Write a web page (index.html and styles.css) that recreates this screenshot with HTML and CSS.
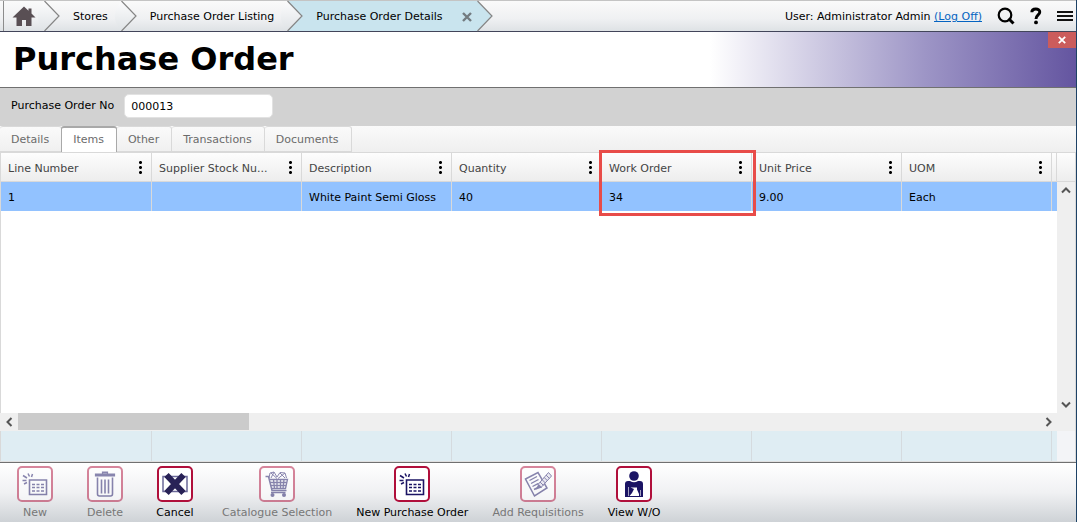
FILE: index.html
```html
<!DOCTYPE html>
<html lang="en">
<head>
<meta charset="utf-8">
<title>Purchase Order Details</title>
<link rel="stylesheet" href="styles.css">
</head>
<body>
<svg class="defs" aria-hidden="true">
  <defs>
    <linearGradient id="puff" x1="0" y1="0" x2="0" y2="1">
      <stop offset="0" stop-color="#fcfcfd"/>
      <stop offset="1" stop-color="#dfe3e6"/>
    </linearGradient>
    <symbol id="sep" viewBox="-7 0 23 30">
      <path d="M0.500 0Q-13 15 0.500 30L15 15z" fill="url(#puff)"/>
      <path class="chevron" d="M0.500 0L15 15L0.500 30"/>
    </symbol>
    <symbol id="table-new" viewBox="0 0 36 36">
      <path d="M12.500 14h17v14.500h-17z" fill="#fff" stroke="#1b1464" stroke-width="1.600"/>
      <path d="M15 18.500h3m1.500 0h3m1.500 0h3M15 21.500h3m1.500 0h3m1.500 0h3M15 25h3m1.500 0h3m1.500 0h3" stroke="#1b1464" stroke-width="1.500"/>
      <path d="M6 9.500l4 2.500M5.500 14.500h4M7 18l3-1.500M11 7.500l1.500 3M15.500 8l-1 3" stroke="#1b1464" stroke-width="1.500" fill="none"/>
    </symbol>
  </defs>
</svg>
<div class="app">
  <header class="topbar">
    <nav class="crumbs" aria-label="Breadcrumb">
      <a class="crumb home" href="#" aria-label="Home">
        <svg width="24" height="21" viewBox="0 0 24 21"><path d="M12 0.500L0.500 11.500h4V20h5.500v-6h4v6H19.500v-8.500h4L19.500 7.600V2.500h-3v2.300z" fill="#594f54"/></svg>
      </a>
      <svg class="sep"><use href="#sep" x="-7" width="23" height="30"/></svg>
      <a class="crumb" href="#">Stores</a>
      <svg class="sep"><use href="#sep" x="-7" width="23" height="30"/></svg>
      <a class="crumb" href="#">Purchase Order Listing</a>
      <svg class="sep" viewBox="0 0 16 30"><path class="blue" d="M0.500 0H16V30H0.500L15 15z"/><path d="M0.500 0Q-13 15 0.500 30L15 15z" fill="url(#puff)"/><path class="chevron" d="M0.500 0L15 15L0.500 30"/></svg>
      <span class="crumb current">Purchase Order Details
        <button class="crumb-close" type="button" aria-label="Close tab"><svg width="10" height="10" viewBox="0 0 10 10"><path d="M1 1L9 9M9 1L1 9" stroke="#737b80" stroke-width="2.400"/></svg></button>
      </span>
      <svg class="sep" viewBox="0 0 16 30"><path class="blue" d="M0 0L15 15L0 30z"/><path class="chevron" d="M0.500 0L15 15L0.500 30"/></svg>
    </nav>
    <div class="tools">
      <span>User: Administrator Admin <a class="logoff" href="#">(Log Off)</a></span>
      <button type="button" aria-label="Search"><svg width="18" height="18" viewBox="0 0 18 18"><circle cx="8" cy="8" r="6.300" fill="none" stroke="#000" stroke-width="2.200"/><path d="M11.500 11.500L16.500 16.500" stroke="#000" stroke-width="3"/></svg></button>
      <button type="button" aria-label="Help"><svg width="12" height="18" viewBox="0 0 12 18"><path d="M1.800 5.300C1.800 1 9.800 1 9.800 5C9.800 8 6 8 6 12" fill="none" stroke="#000" stroke-width="2.900"/><circle cx="6" cy="15.400" r="1.900"/></svg></button>
      <button type="button" aria-label="Menu"><svg width="16" height="10" viewBox="0 0 16 10"><path d="M0 1h16M0 5h16M0 9h16" stroke="#111" stroke-width="2"/></svg></button>
    </div>
  </header>

  <section class="banner">
    <h1>Purchase Order</h1>
    <button class="close" type="button" aria-label="Close"><svg width="8" height="8" viewBox="0 0 8 8"><path d="M0.800 0.800L7.200 7.200M7.200 0.800L0.800 7.200" stroke="#fff" stroke-width="1.800"/></svg></button>
  </section>

  <form class="order">
    <label for="po">Purchase Order No</label>
    <input id="po" type="text" value="000013">
  </form>

  <div class="tabs" role="tablist">
    <button type="button" role="tab">Details</button>
    <button type="button" role="tab" class="active" aria-selected="true">Items</button>
    <button type="button" role="tab">Other</button>
    <button type="button" role="tab">Transactions</button>
    <button type="button" role="tab">Documents</button>
  </div>

  <main class="grid">
    <div class="rows">
      <table class="items">
        <colgroup><col class="first"><col class="std"><col class="std"><col class="std"><col class="std"><col class="std"><col class="std"><col></colgroup>
        <thead>
          <tr>
            <th><div class="head"><span>Line Number</span><button type="button" class="dots" aria-label="Column menu"></button></div></th>
            <th><div class="head"><span>Supplier Stock Nu...</span><button type="button" class="dots" aria-label="Column menu"></button></div></th>
            <th><div class="head"><span>Description</span><button type="button" class="dots" aria-label="Column menu"></button></div></th>
            <th><div class="head"><span>Quantity</span><button type="button" class="dots" aria-label="Column menu"></button></div></th>
            <th class="marked"><div class="head"><span>Work Order</span><button type="button" class="dots" aria-label="Column menu"></button></div></th>
            <th><div class="head"><span>Unit Price</span><button type="button" class="dots" aria-label="Column menu"></button></div></th>
            <th><div class="head"><span>UOM</span><button type="button" class="dots" aria-label="Column menu"></button></div></th>
            <th></th>
          </tr>
        </thead>
        <tbody>
          <tr><td>1</td><td></td><td>White Paint Semi Gloss</td><td>40</td><td>34</td><td>9.00</td><td>Each</td><td></td></tr>
        </tbody>
      </table>
    </div>
    <div class="side">
      <div class="cap"></div>
      <div class="vscroll">
        <svg width="10" height="8" viewBox="0 0 10 8"><path d="M1 6.500L5 2.500L9 6.500"/></svg>
        <svg width="10" height="8" viewBox="0 0 10 8"><path d="M1 1.500L5 5.500L9 1.500"/></svg>
      </div>
    </div>
    <div class="hscroll">
      <svg width="8" height="10" viewBox="0 0 8 10"><path d="M6.500 1L2.500 5L6.500 9"/></svg>
      <div class="track"><div class="thumb"></div></div>
      <svg width="8" height="10" viewBox="0 0 8 10"><path d="M1.500 1L5.500 5L1.500 9"/></svg>
    </div>
    <div class="totals"><span class="first"></span><span></span><span></span><span></span><span></span><span></span><span></span></div>
    <div class="totals-cap"></div>
  </main>

  <footer class="actions">
    <button type="button" disabled>
      <svg class="icon" viewBox="2 2 32 32"><use href="#table-new" width="36" height="36"/></svg>New</button>
    <button type="button" disabled>
      <svg class="icon" viewBox="2 2 32 32"><path d="M15.500 7.500V6h5v1.500M8.500 8h19v2h-19z" fill="#1b1464" stroke="#1b1464" stroke-width="1.200"/><path d="M10.500 11.500V28q0 2 2 2h11q2 0 2-2V11.500" fill="none" stroke="#1b1464" stroke-width="1.600"/><path d="M14.500 13.500v14M18 13.500v14M21.500 13.500v14" stroke="#1b1464" stroke-width="1.600"/></svg>Delete</button>
    <button type="button">
      <svg class="icon" viewBox="2 2 32 32"><path d="M6 10.500h24v15H6z" fill="#fff" stroke="#6a6899" stroke-width="1.500"/><path d="M9.500 9L26.500 27M26.500 9L9.500 27" stroke="#282256" stroke-width="6"/></svg>Cancel</button>
    <button type="button" disabled>
      <svg class="icon" viewBox="2 2 32 32"><g fill="none" stroke="#1b1464"><path d="M6.500 10.500h3l3.500 14h14.500" stroke-width="1.500"/><path d="M10 13.500h18.500l-2 9H12M11 16.500h17M11.500 19.500h15.500M14.500 13.500l1 9M18 13.500v9M21.500 13.500v9M25 13.500l-1 9" stroke-width="1.300"/><path d="M10 12L11 7l4-1 3 5 3-4.500 5 .5 1.500 5M12 7l6 5.500M15 6l-3 6M21 7l5 5M26 7l-7 5.500" stroke-width="1"/><path d="M12 26.500h14.500" stroke-width="1.300"/></g><circle cx="13.500" cy="29" r="2" fill="#1b1464"/><circle cx="25" cy="29" r="2" fill="#1b1464"/></svg>Catalogue Selection</button>
    <button type="button">
      <svg class="icon" viewBox="2 2 32 32"><use href="#table-new" width="36" height="36"/></svg>New Purchase Order</button>
    <button type="button" disabled>
      <svg class="icon" viewBox="2 2 32 32"><path d="M5.500 13L18 6.500L27 22L14.500 30z" fill="#fff" stroke="#1b1464" stroke-width="1.500"/><path d="M9.500 14.500l7.500-4M11 17.500l7.500-4M12.500 20.500l6-3.200M14 23.500l4-2" stroke="#1b1464" stroke-width="1.400"/><path d="M28.500 6.500l3 3.500L21 21.500l-3-3z" fill="#dcdaea" stroke="#1b1464" stroke-width="1"/><path d="M26 9l3.500 3.500M24 11.300l3.500 3.500M22 13.600l3.500 3.500M20 16l3.500 3.500" stroke="#1b1464" stroke-width="1"/><path d="M18.500 18l3.500 3.500-6.500 2.200z" fill="#1b1464"/></svg>Add Requisitions</button>
    <button type="button">
      <svg class="icon" viewBox="2 2 32 32"><circle cx="18" cy="10" r="4.800" fill="#1b1464"/><path d="M9 18q0-3 3-3h2q4 2.500 8 0h2q3 0 3 3v13H9z" fill="#1b1464"/><path d="M14.500 21.500h6.500v2l2 4.500v2h-9.500l2.500-3 2-4z" fill="#fff"/><path d="M12.500 21v9M24.500 24v6" stroke="#fff" stroke-width="0.600"/></svg>View W/O</button>
  </footer>
</div>
</body>
</html>
```
FILE: styles.css
```css
* { box-sizing: border-box; }

body {
  margin: 0;
  font: 11px/14px Verdana, "DejaVu Sans", sans-serif;
  color: #000;
}

button {
  font: inherit;
  border: 0;
  padding: 0;
  background: none;
}

.defs { position: absolute; width: 0; height: 0; }

.app {
  display: flex;
  flex-direction: column;
  min-height: 100vh;
  border-right: 1px solid #1d4266;
}

/* Breadcrumb bar */
.topbar {
  display: flex;
  justify-content: space-between;
  height: 32px;
  border-top: 1px solid #c4c4c4;
  border-bottom: 1px solid #42455a;
  background: linear-gradient(#fafafa, #eff0f2 60%, #dee2e5);
}
.crumbs {
  display: flex;
  margin-left: 3px;
  border-left: 1px solid #8c8c8c;
}
.crumb {
  display: flex;
  align-items: center;
  padding: 2px 13px 0;
  color: #000;
  text-decoration: none;
  white-space: nowrap;
}
.home { width: 40px; padding: 0 7px 0 8px; }
.current { gap: 19px; padding-right: 5px; background: #c9e4ee; }
.crumb-close { display: flex; }
.sep { width: 16px; height: 30px; flex: none; overflow: visible; }
.chevron { fill: none; stroke: #858585; stroke-width: 1.2; }
.blue { fill: #c9e4ee; }

.tools {
  display: flex;
  align-items: center;
  gap: 15px;
  padding-right: 3px;
  white-space: nowrap;
}
.tools span { padding-top: 2px; }
.tools button { display: flex; }
.logoff { color: #0563c1; }

/* Title banner */
.banner {
  display: flex;
  justify-content: space-between;
  align-items: flex-start;
  border-bottom: 1px solid #707070;
  background: linear-gradient(90deg, #fff 66%, #9d95c6 86%, #6455a0);
}
h1 {
  margin: 0;
  padding: 7px 13px 8px;
  font-size: 32px;
  line-height: 40px;
}
.close {
  display: flex;
  align-items: center;
  justify-content: center;
  width: 28px;
  height: 16px;
  background: #cb5c5c;
}

.order {
  display: flex;
  align-items: center;
  gap: 10px;
  padding: 6px 11px 8px;
  background: #d2d2d2;
}
.order input {
  width: 149px;
  height: 24px;
  padding: 0 6px;
  border: 1px solid #e2e2e2;
  border-radius: 5px;
  background: #fff;
  font: inherit;
}

/* Tabs */
.tabs {
  display: flex;
  height: 26px;
  background: linear-gradient(#fafafa, #efefef);
}
.tabs button {
  padding: 2px 12px 0 11px;
  border: solid #d9d9d9;
  border-width: 1px 1px 1px 0;
  border-radius: 3px 3px 0 0;
  background: linear-gradient(#fafafa, #f0f0f0);
  color: #6b6b6b;
}
.tabs .active {
  padding-top: 0;
  border: 1px solid #a9a9a9;
  border-top-width: 2px;
  border-bottom: 0;
  background: #fff;
  margin-left: -1px;
}

/* Data grid */
.grid {
  flex: 1;
  display: grid;
  grid-template-columns: 1fr 18px;
  grid-template-rows: 1fr 18px 30px;
  border-right: 1px solid #d9d9d9;
  border-bottom: 1px solid #e0e0e0;
}
.rows { border-left: 1px solid #d9d9d9; }
.items {
  width: 100%;
  table-layout: fixed;
  border-collapse: separate;
  border-spacing: 0;
}
.items .first { width: 151px; }
.items .std { width: 150px; }
.items th, .items td {
  height: 30px;
  padding: 0 7px;
  border-right: 1px solid #d9d9d9;
  text-align: left;
  font-weight: normal;
  white-space: nowrap;
}
.items th {
  border-top: 1px solid #d9d9d9;
  border-bottom: 1px solid #d9d9d9;
  background: linear-gradient(#fdfdfd, #ededed);
  color: #444;
}
.items td { height: 29px; padding-top: 2px; background: #92c2ff; }
.items td:last-child { border-right: 0; }
.items th:last-child, .items td:last-child { padding: 0; }
.head {
  display: flex;
  align-items: center;
  justify-content: space-between;
}
.head span { padding-top: 3px; }
.dots {
  flex: none;
  width: 7px;
  height: 15px;
  background: radial-gradient(circle, #000 1px, transparent 2px) center / 7px 5px;
}
.marked { position: relative; }
.marked::after {
  content: "";
  position: absolute;
  inset: -3px -5px -35px -3px;
  border: 3px solid #e84c49;
  pointer-events: none;
}

.side { display: flex; flex-direction: column; }
.cap {
  height: 30px;
  border-top: 1px solid #d9d9d9;
  border-bottom: 1px solid #d9d9d9;
  background: linear-gradient(#fdfdfd, #ededed);
}
.vscroll {
  flex: 1;
  display: flex;
  flex-direction: column;
  justify-content: space-between;
  align-items: center;
  padding: 4px 0;
  background: #efefef;
}
.vscroll path, .hscroll path { fill: none; stroke: #555; stroke-width: 2; }
.hscroll {
  grid-column: 1 / -1;
  display: flex;
  align-items: center;
  gap: 5px;
  padding: 0 22px 0 5px;
  background: #efefef;
}
.track { flex: 1; align-self: stretch; }
.thumb { width: 22.6%; height: 17px; background: #cbcbcb; }
.totals {
  display: flex;
  border-left: 1px solid #d9d9d9;
  background: #dfedf3;
}
.totals span { flex: none; width: 150px; border-right: 1px solid #d5dbdf; }
.totals .first { width: 151px; }
.totals-cap { background: #f3f4f7; }

/* Action bar */
.actions {
  display: flex;
  gap: 10px;
  padding: 3px 5px 1px;
  border-top: 1px solid #707070;
  background: linear-gradient(#fff, #f0f1f3 50%, #ced2d6);
}
.actions button {
  display: flex;
  flex-direction: column;
  align-items: center;
  gap: 3px;
  min-width: 60px;
  padding: 0 7px;
  line-height: 16px;
  color: #000;
  white-space: nowrap;
}
.actions button:disabled { color: #777; }
.icon {
  width: 36px;
  height: 36px;
  border: 2px solid #b00f3b;
  border-radius: 5px;
  background: #fff;
}
.actions button:disabled .icon { opacity: 0.5; }
```
